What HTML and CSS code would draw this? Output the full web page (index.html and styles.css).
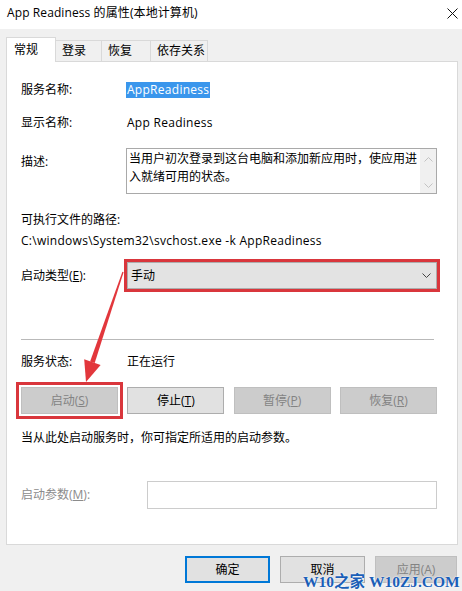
FILE: index.html
```html
<!DOCTYPE html>
<html lang="zh-CN">
<head>
  <meta charset="UTF-8" />
  <meta name="viewport" content="width=device-width, initial-scale=1.0" />
  <title>App Readiness 的属性(本地计算机)</title>
  <link rel="stylesheet" href="styles.css">
</head>
<body>
  <div class="titlebar">
    <span class="title">App Readiness 的属性(本地计算机)</span>
    <svg class="close" width="11" height="11" viewBox="0 0 11 11">
      <path d="M0.5 0.5L10.5 10.5M10.5 0.5L0.5 10.5" stroke="#111" stroke-width="1" fill="none" />
    </svg>
  </div>

  <div class="tabs">
    <div class="tab active">常规</div>
    <div class="tab">登录</div>
    <div class="tab">恢复</div>
    <div class="tab">依存关系</div>
  </div>

  <div class="panel">
    <div class="row row-name">
      <span class="label">服务名称:</span>
      <span class="selected latin">AppReadiness</span>
    </div>
    <div class="row row-display">
      <span class="label">显示名称:</span>
      <span class="latin">App Readiness</span>
    </div>
    <div class="row row-desc">
      <span class="label label-desc">描述:</span>
      <div class="desc-box">
        <div class="desc-text">当用户初次登录到这台电脑和添加新应用时，使应用进入就绪可用的状态。</div>
        <div class="scrollbar">
          <svg width="9" height="5" viewBox="0 0 9 5"><path d="M0.5 4.5L4.5 0.5L8.5 4.5" stroke="#c2c2c2" fill="none" /></svg>
          <svg width="9" height="5" viewBox="0 0 9 5"><path d="M0.5 0.5L4.5 4.5L8.5 0.5" stroke="#c2c2c2" fill="none" /></svg>
        </div>
      </div>
    </div>
    <div class="line row-path-label">可执行文件的路径:</div>
    <div class="line row-path latin">C:\windows\System32\svchost.exe -k AppReadiness</div>
    <div class="row row-startup">
      <span class="label">启动类型(<u>E</u>):</span>
      <div class="select">
        <span>手动</span>
        <svg width="9" height="5" viewBox="0 0 9 5"><path d="M0.5 0.5L4.5 4.5L8.5 0.5" stroke="#444" fill="none" /></svg>
      </div>
    </div>
    <div class="separator"></div>
    <div class="row row-status">
      <span class="label">服务状态:</span>
      <span>正在运行</span>
    </div>
    <div class="btn-row">
      <button class="btn disabled marked">启动(<u>S</u>)</button>
      <button class="btn">停止(<u>T</u>)</button>
      <button class="btn disabled">暂停(<u>P</u>)</button>
      <button class="btn disabled">恢复(<u>R</u>)</button>
    </div>
    <div class="line row-hint">当从此处启动服务时，你可指定所适用的启动参数。</div>
    <div class="row row-param">
      <span class="label label-param">启动参数(<u>M</u>):</span>
      <div class="param-input"></div>
    </div>
  </div>

  <div class="footer">
    <button class="btn btn-dialog default">确定</button>
    <button class="btn btn-dialog">取消</button>
    <button class="btn btn-dialog btn-apply disabled">应用(A)</button>
  </div>

  <svg class="arrow" width="462" height="591" viewBox="0 0 462 591">
    <polygon points="123.6,272.3 122.4,271.7 90.1,361.4 94.7,363.0" fill="#e2373c" />
    <polygon points="86,382 84.2,359.2 100.6,364.9" fill="#e2373c" />
  </svg>

  <div class="watermark">W10之家 W10ZJ.COM</div>
</body>
</html>
```

FILE: styles.css
```css
body {
  margin: 0;
  width: 462px;
  height: 591px;
  overflow: hidden;
  position: relative;
  background: #f0f0f0;
  font-family: "Open Sans", "Noto Sans CJK SC", sans-serif;
  font-size: 12px;
  line-height: 16px;
  color: #000;
}

u {
  text-underline-offset: 1px;
}

.latin {
  letter-spacing: 0.28px;
}

.titlebar {
  height: 29px;
  box-sizing: border-box;
  background: #fff;
  display: flex;
  justify-content: space-between;
  align-items: flex-start;
  padding: 5px 4px 0 7px;
}

.title {
  letter-spacing: 0.1px;
}

.close {
  margin-top: 3px;
}

/* tabs */
.tabs {
  display: flex;
  align-items: flex-end;
  height: 24px;
  margin-top: 8px;
  padding-left: 6px;
}

.tab {
  box-sizing: border-box;
  height: 21px;
  padding: 2px 0 0 6px;
  border: 1px solid #d9d9d9;
  border-bottom: none;
  background: #f0f0f0;
  margin-left: -1px;
}

.tab:nth-child(1) { width: 50px; margin-left: 0; }
.tab:nth-child(2) { width: 47px; }
.tab:nth-child(3) { width: 50px; }
.tab:nth-child(4) { width: 58px; }

.tab.active {
  height: 25px;
  padding: 4px 0 0 7px;
  margin-bottom: -1px;
  background: #fff;
  position: relative;
  z-index: 1;
}

/* main panel */
.panel {
  box-sizing: border-box;
  height: 484px;
  margin: 0 4px 0 6px;
  padding: 0 20px 0 14px;
  border: 1px solid #d9d9d9;
  background: #fff;
}

.row {
  display: flex;
  align-items: center;
}

.label {
  width: 106px;
  flex: none;
}

.selected {
  background: #3a96ec;
  color: #fff;
  padding: 0 1px;
  margin-left: -1px;
}

.row-name { margin-top: 20px; }
.row-display { margin-top: 17px; }

.row-desc {
  margin-top: 17px;
  align-items: flex-start;
}

.label-desc {
  padding-top: 6px;
  width: 105px;
}

.desc-box {
  flex: 1;
  height: 46px;
  box-sizing: border-box;
  border: 1px solid #a9a9a9;
  display: flex;
}

.desc-text {
  flex: 1;
  padding: 1px 2px 0 2px;
  line-height: 18px;
}

.scrollbar {
  width: 16px;
  background: #f0f0f0;
  display: flex;
  flex-direction: column;
  justify-content: space-between;
  align-items: center;
  padding: 8px 0 5px;
}

.row-path-label { margin-top: 18px; }
.row-path { margin-top: 5px; }

.row-startup { margin-top: 13px; }

.select {
  flex: 1;
  height: 27px;
  box-sizing: border-box;
  border: 1px solid #adadad;
  background: #e3e3e3;
  outline: 3px solid #d9363c;
  display: flex;
  justify-content: space-between;
  align-items: center;
  padding: 0 5px 0 3px;
}

.separator {
  height: 1px;
  background: #b9b9b9;
  margin-top: 50px;
  margin-right: 3px;
}

.row-status { margin-top: 14px; }

.btn-row {
  display: flex;
  justify-content: space-between;
  margin-top: 17px;
}

.btn {
  width: 97px;
  height: 27px;
  box-sizing: border-box;
  padding: 0;
  border: 1px solid #adadad;
  background: #e1e1e1;
  font: inherit;
  color: #000;
}

.btn.disabled {
  background: #cccccc;
  border-color: #bfbfbf;
  color: #838383;
}

.btn.marked {
  outline: 3px solid #d9363c;
  outline-offset: 2px;
}

.row-hint { margin-top: 16px; }

.row-param { margin-top: 35px; }

.label-param {
  width: 126px;
  color: #8b8b8b;
}

.param-input {
  width: 290px;
  height: 28px;
  box-sizing: border-box;
  border: 1px solid #cccccc;
  background: #fff;
}

/* dialog buttons */
.footer {
  display: flex;
  justify-content: flex-end;
  gap: 10px;
  margin-top: 11px;
  padding-right: 5px;
}

.btn-dialog {
  width: 85px;
}

.btn-apply {
  width: 82px;
}

.btn.default {
  border: 2px solid #0078d7;
}

.arrow {
  position: absolute;
  left: 0;
  top: 0;
  pointer-events: none;
}

.watermark {
  position: absolute;
  left: 303px;
  top: 574px;
  font-family: "Liberation Serif", "Noto Sans CJK SC", serif;
  font-weight: bold;
  font-size: 15.5px;
  line-height: 16px;
  color: #1b5fb7;
  text-shadow: 0 0 2px #fff, 0 0 1px #fff;
  white-space: nowrap;
}
```
